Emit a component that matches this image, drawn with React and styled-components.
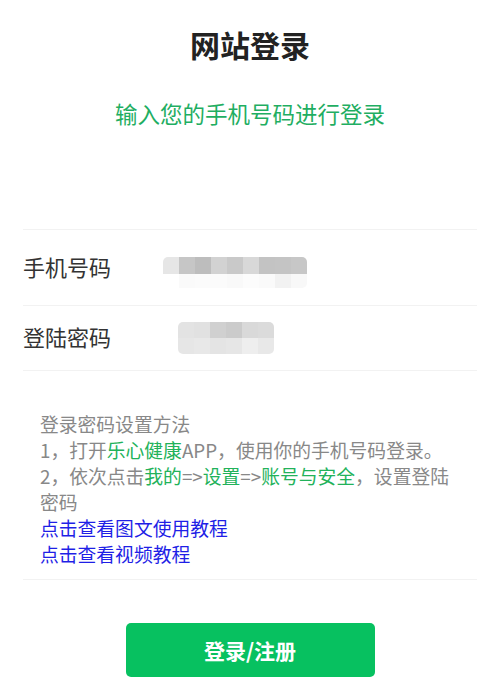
import styled, { createGlobalStyle } from "styled-components";

const GlobalStyle = createGlobalStyle`
  html, body {
    margin: 0;
    padding: 0;
    background: #fff;
  }
  body {
    font-family: "Microsoft YaHei", "Noto Sans CJK SC", "Noto Sans", sans-serif;
  }
`;

const Page = styled.div`
  width: 500px;
  min-height: 688px;
  background: #fff;
  display: flex;
  flex-direction: column;
`;

const Header = styled.div`
  display: flex;
  flex-direction: column;
  align-items: center;
  padding-top: 23px;
  height: 229px;
  box-sizing: border-box;
`;

const Title = styled.h1`
  margin: 0;
  font-size: 30px;
  line-height: 42px;
  font-weight: 700;
  color: #222;
`;

const Subtitle = styled.p`
  margin: 33px 0 0;
  font-size: 22.5px;
  line-height: 30px;
  color: #1fae62;
`;

const Form = styled.div`
  margin: 0 23px;
  border-top: 1px solid #f2f2f2;
`;

const Row = styled.div`
  display: flex;
  align-items: center;
  height: ${(p) => p.$h}px;
  border-bottom: 1px solid #f2f2f2;
  box-sizing: border-box;
`;

const Label = styled.span`
  width: 90px;
  font-size: 22px;
  line-height: 30px;
  padding-bottom: 4px;
  color: #333;
`;

const Mosaic = styled.div`
  margin-left: ${(p) => p.$offset}px;
  margin-top: ${(p) => p.$top}px;
  display: grid;
  grid-template-columns: repeat(${(p) => p.$cols}, 16px);
  grid-auto-rows: ${(p) => p.$rowH};
  border-radius: 5px;
  overflow: hidden;
`;

const Cell = styled.span`
  background: ${(p) => p.$c};
`;

const Help = styled.div`
  margin: 0 23px;
  padding: 40px 15px 12px 17px;
  border-bottom: 1px solid #f2f2f2;
  font-size: 18.8px;
  line-height: 26px;
  color: #888;
`;

const Line = styled.div``;

const Green = styled.span`
  color: #22b25a;
`;

const LinkLine = styled.a`
  display: block;
  color: #1f1fe6;
  text-decoration: none;
`;

const Actions = styled.div`
  display: flex;
  justify-content: center;
  padding-top: 43px;
`;

const Button = styled.button`
  width: 249px;
  height: 54px;
  border: none;
  border-radius: 5px;
  background: #07c160;
  color: #fff;
  font-family: inherit;
  font-size: 21px;
  font-weight: 700;
  cursor: pointer;
`;

const phoneCells = [
  "#e6e6e6", "#c6c6c6", "#bdbdbd", "#d2d2d2", "#c9c9c9", "#d8d8d8", "#c3c3c3", "#c4c4c4", "#c7c7c7",
  "#fff", "#fafafa", "#fbfbfb", "#fbfbfb", "#f9f9f9", "#fcfcfc", "#fafafa", "#f2f2f2", "#f8f8f8",
];

const pwdCells = [
  "#e3e3e3", "#e1e1e1", "#d0d0d0", "#cbcbcb", "#d9d9d9", "#dbdbdb",
  "#e6e6e6", "#e8e8e8", "#e4e4e4", "#e6e6e6", "#eeeeee", "#e8e8e8",
];

export default function App() {
  return (
    <Page>
      <GlobalStyle />
      <Header>
        <Title>网站登录</Title>
        <Subtitle>输入您的手机号码进行登录</Subtitle>
      </Header>
      <Form>
        <Row $h={76}>
          <Label>手机号码</Label>
          <Mosaic $offset={50} $top={10} $cols={9} $rowH="17px 14px">
            {phoneCells.map((c, i) => (
              <Cell key={i} $c={c} />
            ))}
          </Mosaic>
        </Row>
        <Row $h={65}>
          <Label>登陆密码</Label>
          <Mosaic $offset={65} $top={0} $cols={6} $rowH="16px 16px">
            {pwdCells.map((c, i) => (
              <Cell key={i} $c={c} />
            ))}
          </Mosaic>
        </Row>
      </Form>
      <Help>
        <Line>登录密码设置方法</Line>
        <Line>
          1，打开<Green>乐心健康</Green>APP，使用你的手机号码登录。
        </Line>
        <Line>
          2，依次点击<Green>我的</Green>=&gt;<Green>设置</Green>=&gt;
          <Green>账号与安全</Green>，设置登陆密码
        </Line>
        <LinkLine href="#">点击查看图文使用教程</LinkLine>
        <LinkLine href="#">点击查看视频教程</LinkLine>
      </Help>
      <Actions>
        <Button>登录/注册</Button>
      </Actions>
    </Page>
  );
}
